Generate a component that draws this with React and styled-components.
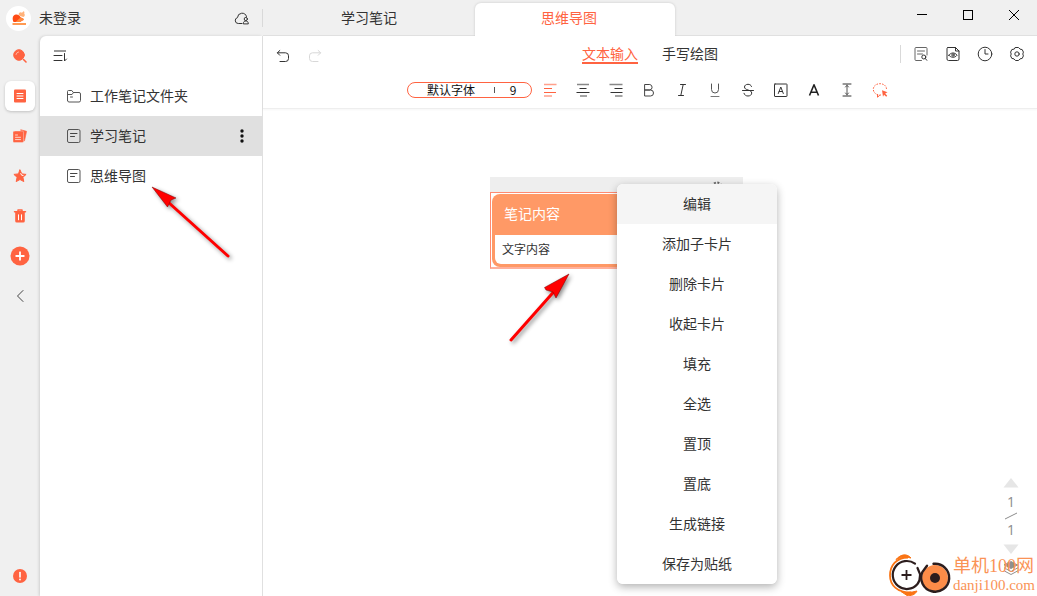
import React from "react";
import styled, { createGlobalStyle, ThemeProvider, css } from "styled-components";

const theme = {
  accent: "#ff6341",
  card: "#ff9966",
  chrome: "#f0f0f0",
  line: "#e0e0e0",
  text: "#333333",
};

const Global = createGlobalStyle`
  *, *::before, *::after { box-sizing: border-box; }
  body { margin: 0; background: #fff; }
  body, button, select {
    font-family: "Noto Sans CJK SC", "Noto Sans", sans-serif;
    font-size: 14px;
    line-height: 20px;
    color: #333;
  }
  button { border: 0; padding: 0; background: none; cursor: pointer; }
  svg { display: block; flex: none; }
`;

const Shell = styled.div`
  position: relative;
  display: flex;
  flex-direction: column;
  min-height: 100vh;
  overflow: hidden;
  background: ${(p) => p.theme.chrome};
`;

/* ---------- title bar ---------- */

const TitleBar = styled.header`
  display: flex;
  height: 36px;
  background: ${(p) => p.theme.chrome};
`;

const Account = styled.div`
  display: flex;
  align-items: center;
  width: 263px;
  padding-left: 6px;
`;

const Avatar = styled.span`
  display: grid;
  place-items: center;
  width: 25px;
  height: 25px;
  margin-right: 8px;
  border-radius: 50%;
  background: #fff;
`;

const AccountName = styled.button`
  flex: 1;
  padding-bottom: 2px;
  text-align: left;
`;

const Divider = styled.span`
  width: 1px;
  height: 18px;
  margin-left: 12px;
  background: #d9d9d9;
`;

const TabBar = styled.nav`
  display: flex;
  flex: 1;
  align-items: flex-end;
  box-shadow: inset 0 -1px 0 ${(p) => p.theme.line};
`;

const Tab = styled.button`
  width: 212px;
  height: 36px;
  padding-bottom: 2px;
  ${(p) =>
    p.$active &&
    css`
      width: 200px;
      height: 33px;
      padding: 0 12px 5px 0;
      border-radius: 6px 6px 0 0;
      background: #fff;
      color: ${p.theme.accent};
      box-shadow: 0 0 3px rgba(0, 0, 0, 0.16);
      clip-path: inset(-4px -4px 0 -4px);
    `}
`;

const WindowControls = styled.div`
  display: flex;
  margin-left: auto;
  align-self: flex-start;
`;

const WindowButton = styled.button`
  display: grid;
  place-items: center;
  width: 46px;
  height: 30px;
`;

/* ---------- body ---------- */

const Body = styled.div`
  display: grid;
  grid-template-columns: 40px 222px minmax(0, 1fr);
  flex: 1;
`;

const Rail = styled.nav`
  display: flex;
  flex-direction: column;
`;

const RailButton = styled.button`
  display: grid;
  place-items: center;
  width: 40px;
  height: 40px;
  color: ${(p) => p.theme.accent};
  ${(p) => p.$last && "margin-top: auto;"}
`;

const RailTile = styled.span`
  display: grid;
  place-items: center;
  width: 30px;
  height: 30px;
  border-radius: 6px;
  ${(p) =>
    p.$active && "background: #fff; box-shadow: 0 1px 3px rgba(0, 0, 0, 0.2);"}
`;

const Notebook = styled.aside`
  border-radius: 6px 0 0 0;
  background: #fff;
  box-shadow: -1px 0 3px rgba(0, 0, 0, 0.14);
`;

const SortButton = styled.button`
  display: flex;
  align-items: center;
  width: 40px;
  height: 40px;
  padding-left: 13px;
`;

const NoteList = styled.ul`
  margin: 0;
  padding: 0;
  list-style: none;
`;

const NoteRow = styled.li`
  display: flex;
  align-items: center;
  height: 40px;
  padding-right: 12px;
  background: ${(p) => (p.$active ? p.theme.line : "transparent")};
`;

const NoteName = styled.button`
  display: flex;
  flex: 1;
  align-items: center;
  gap: 8px;
  height: 40px;
  padding-left: 26px;
`;

const NoteLabel = styled.span`
  padding-bottom: 2px;
`;

const Editor = styled.main`
  display: flex;
  flex-direction: column;
  min-width: 0;
  background: #fff;
  border-left: 1px solid ${(p) => p.theme.line};
`;

const Toolbars = styled.div`
  border-bottom: 1px solid #eeeeee;
  box-shadow: 0 1px 2px rgba(0, 0, 0, 0.04);
`;

const TopTools = styled.div`
  display: grid;
  grid-template-columns: 1fr auto 1fr;
  align-items: center;
  height: 36px;
  padding: 0 12px;
`;

const IconGroup = styled.div`
  display: flex;
  align-items: center;
  gap: 16px;
  justify-content: ${(p) => (p.$end ? "flex-end" : "flex-start")};
  ${(p) => !p.$end && "padding-top: 4px;"}
  ${Divider} { margin-right: -4px; }
`;

const ToolButton = styled.button`
  display: grid;
  place-items: center;
  width: 16px;
  height: 16px;
  color: ${(p) => (p.$accent ? p.theme.accent : "#333")};
  &:disabled { color: #d8d8d8; }
`;

const ModeTabs = styled.div`
  display: flex;
  gap: 24px;
`;

const ModeTab = styled.button`
  height: 20px;
  border-bottom: 2px solid ${(p) => (p.$active ? p.theme.accent : "transparent")};
  color: ${(p) => (p.$active ? p.theme.accent : p.theme.text)};
  line-height: 18px;
`;

const FormatTools = styled.div`
  display: flex;
  align-items: center;
  justify-content: center;
  gap: 17px;
  height: 36px;
  padding-right: 5px;
`;

const FontPill = styled.div`
  display: flex;
  align-items: center;
  flex: none;
  width: 125px;
  height: 16px;
  margin-right: -7px;
  border: 1px solid ${(p) => p.theme.accent};
  border-radius: 8px;
`;

const PillSelect = styled.select`
  appearance: none;
  width: ${(p) => p.$width};
  height: 14px;
  padding: 0;
  border: 0;
  background: none;
  color: #111;
  font-size: 12px;
  line-height: 14px;
  text-align: center;
`;

const PillDivider = styled.span`
  width: 1px;
  height: 6px;
  background: #555;
`;

/* ---------- mind-map canvas ---------- */

const Canvas = styled.section`
  position: relative;
  flex: 1;
  min-height: 484px;
`;

const CardNode = styled.article`
  position: absolute;
  left: 227px;
  top: 68px;
  width: 253px;
`;

const CardHandle = styled.div`
  display: flex;
  justify-content: flex-end;
  height: 15px;
  padding: 4px 20px 0 0;
  background: #eeeeee;
  color: #666;
  overflow: hidden;
`;

const CardFrame = styled.div`
  border: 1px solid #ff8a70;
  border-bottom: 2px solid #ffb09c;
  padding: 1px 1px 0;
`;

const Card = styled.div`
  padding-bottom: 3px;
  border-radius: 8px;
  background: ${(p) => p.theme.card};
`;

const CardTitle = styled.h2`
  margin: 0;
  padding: 9px 12px 12px;
  color: #fff;
  font-size: 14px;
  font-weight: 400;
  line-height: 20px;
`;

const CardText = styled.p`
  margin: 0 3px;
  padding: 4px 7px 5px;
  border-radius: 0 0 6px 6px;
  background: #fff;
  font-size: 12px;
  line-height: 20px;
`;

const ContextMenu = styled.div`
  position: absolute;
  left: 354px;
  top: 75px;
  display: flex;
  flex-direction: column;
  width: 160px;
  border-radius: 6px;
  background: #fff;
  overflow: hidden;
  box-shadow: 0 3px 8px rgba(0, 0, 0, 0.3);
`;

const MenuItem = styled.button`
  height: 40px;
  padding-bottom: 2px;
  background: ${(p) => (p.$hover ? "#f5f5f5" : "#fff")};
`;

const Pager = styled.div`
  position: absolute;
  right: 18px;
  bottom: 20px;
  display: flex;
  flex-direction: column;
  align-items: center;
  width: 16px;
  color: #8c8c8c;
`;

const PagerButton = styled.button`
  height: 10px;
  color: #e6e6e6;
`;

const PageNumber = styled.span`
  height: 20px;
  font-family: "Open Sans", sans-serif;
  margin: ${(p) => (p.$first ? "4px 0 0" : "0 0 4px")};
`;

const LayersButton = styled.button`
  margin-top: 6px;
  color: #8f8f8f;
`;

const Watermark = styled.a`
  position: absolute;
  right: 2px;
  bottom: 0;
  display: flex;
  align-items: center;
  gap: 1px;
  color: #fa9356;
  text-decoration: none;
`;

const WatermarkText = styled.span`
  display: flex;
  flex-direction: column;
  font-family: "Liberation Serif", "Noto Sans CJK SC", serif;
`;

const WatermarkName = styled.span`
  font-size: 18px;
  line-height: 20px;
`;

const WatermarkSite = styled.span`
  font-size: 15px;
  line-height: 18px;
`;

const Pointer = styled.svg`
  position: absolute;
  left: ${(p) => p.$left};
  top: ${(p) => p.$top};
  pointer-events: none;
  filter: drop-shadow(2px 2px 2px rgba(0, 0, 0, 0.45));
`;

/* ---------- icons ---------- */

const Line = ({ size = 16, children, ...rest }) => (
  <svg
    width={size}
    height={size}
    viewBox="0 0 16 16"
    fill="none"
    stroke="currentColor"
    strokeWidth="1"
    strokeLinecap="round"
    strokeLinejoin="round"
    aria-hidden="true"
    {...rest}
  >
    {children}
  </svg>
);

const icons = {
  search: (
    <Line>
      <circle cx="7" cy="7" r="5.3" fill="currentColor" />
      <path d="M4 6.5a3.2 3.2 0 0 1 2.6-2.6" stroke="#ffb3a0" />
      <path d="M11.5 11.5l2.5 2.5" strokeWidth="1.6" />
    </Line>
  ),
  notes: (
    <Line>
      <rect x="2" y="1.5" width="12" height="13" rx="1" fill="currentColor" stroke="none" />
      <path d="M5 5.5h6M5 8h6M5 10.5h6" stroke="#fff" />
    </Line>
  ),
  stickers: (
    <Line>
      <path d="M9 1.800l5.600 1.500-2.100 9.500-2.500.8z" fill="currentColor" strokeWidth=".6" />
      <rect x="1" y="3" width="10.500" height="11.500" rx="1.2" fill="currentColor" stroke="#f0f0f0" strokeWidth=".4" />
      <path d="M3.500 7h2M3.500 9.300h5M3.500 11.600h5" stroke="#ffd6cb" />
    </Line>
  ),
  star: (
    <Line>
      <path d="M8 2l1.800 3.900 4.300.5-3.200 2.900.9 4.300L8 11.500l-3.800 2.100.9-4.300-3.200-2.900 4.300-.5z" fill="currentColor" />
      <path d="M8.800 5.600l.8 1.600 1.500.3" stroke="#fff" />
    </Line>
  ),
  trash: (
    <Line>
      <path d="M2.500 3.800h11M6 3.200V2h4v1.200" strokeWidth="1.500" />
      <path d="M3.200 4h9.600v9a1.500 1.500 0 0 1-1.500 1.500H4.700a1.500 1.500 0 0 1-1.500-1.500z" fill="currentColor" stroke="none" />
      <path d="M6.500 6.800v5M9.500 6.800v5" stroke="#fff" />
    </Line>
  ),
  add: (
    <Line size={20} viewBox="0 0 20 20">
      <circle cx="10" cy="10" r="9.500" fill="currentColor" stroke="none" />
      <path d="M10 6.200v7.600M6.200 10h7.600" stroke="#fff" strokeWidth="1.800" />
    </Line>
  ),
  back: (
    <Line>
      <path d="M11 2.500L5.500 8l5.500 5.500" stroke="#444" />
    </Line>
  ),
  alert: (
    <Line>
      <circle cx="8" cy="8" r="7" fill="currentColor" stroke="none" />
      <path d="M8 4.500v4.500" stroke="#fff" strokeWidth="1.600" />
      <circle cx="8" cy="11.500" r=".9" fill="#fff" stroke="none" />
    </Line>
  ),
  sort: (
    <Line>
      <path d="M1 3h12" stroke="#999" strokeWidth="2" strokeLinecap="butt" />
      <path d="M1 7.500h8M1 12.500h8M11.500 5.500v7.500l2-2" />
    </Line>
  ),
  folder: (
    <Line>
      <path d="M1.500 12.500v-9a1 1 0 0 1 1-1h3.300l1.500 2h5.700a1.500 1.500 0 0 1 1.500 1.500v6.500a1.500 1.500 0 0 1-1.500 1.500H3a1.500 1.500 0 0 1-1.500-1.500zM7.500 4.500L6 6.500H2M4.500 9h2" stroke="#555" />
    </Line>
  ),
  note: (
    <Line>
      <rect x="1.500" y="1.500" width="12.500" height="13" rx="1.500" stroke="#555" />
      <path d="M4.500 5.500h6.500M4.500 8.500h4" stroke="#444" />
    </Line>
  ),
  more: (
    <Line stroke="none">
      <circle cx="8" cy="3" r="1.700" fill="#111" />
      <circle cx="8" cy="8" r="1.700" fill="#111" />
      <circle cx="8" cy="13" r="1.700" fill="#111" />
    </Line>
  ),
  cloud: (
    <Line>
      <path d="M8 13.500H4.300a3 3 0 0 1-.8-5.900 4.600 4.600 0 0 1 9-1.100" />
      <circle cx="11.800" cy="9" r="1.600" />
      <path d="M9.300 13.500c0-1.700 1-2.500 2.500-2.500s2.500.8 2.500 2.500z" />
    </Line>
  ),
  undo: (
    <Line>
      <path d="M4.800 2.500L2.300 4.800l2.500 2.500M2.500 4.800h8a3 3 0 0 1 3 3v2.700a3 3 0 0 1-3 3H5" />
    </Line>
  ),
  redo: (
    <Line>
      <path d="M11.200 2.500l2.500 2.300-2.500 2.500M13.500 4.800h-8a3 3 0 0 0-3 3v2.700a3 3 0 0 0 3 3H11" />
    </Line>
  ),
  find: (
    <Line>
      <path d="M8.500 14.500H3a1 1 0 0 1-1-1V2.500a1 1 0 0 1 1-1h10a1 1 0 0 1 1 1V9M4.500 5h7M4.500 8h5" stroke="#666" />
      <circle cx="10.800" cy="11" r="2" />
      <path d="M12.300 12.500l1.500 1.800" />
    </Line>
  ),
  preview: (
    <Line>
      <path d="M3 1.500h7.500l3.500 3.500v8a1.500 1.500 0 0 1-1.500 1.500H3.500A1.500 1.500 0 0 1 2 13V2.500a1 1 0 0 1 1-1zM10.500 1.500V5H14" />
      <path d="M3.800 9.200c2.300-3 6-3 8.300 0-2.300 2.800-6 2.800-8.300 0z" />
      <circle cx="8" cy="9" r="1.200" />
    </Line>
  ),
  clock: (
    <Line>
      <circle cx="8" cy="8" r="6.800" />
      <path d="M8 3.500V8h3" />
    </Line>
  ),
  settings: (
    <Line>
      <path d="M6.500 1.500h3l1.500 1.600 2.200.5 1.200 2.500-.6 1.900.6 1.900-1.200 2.500-2.200.5-1.500 1.600h-3L5 12.900l-2.200-.5-1.200-2.500.6-1.900-.6-1.900 1.200-2.500L5 3.100z" />
      <circle cx="8" cy="8" r="2.200" />
    </Line>
  ),
  left: (
    <Line strokeLinecap="butt">
      <path d="M2 2.500h12.500M2 14h8" opacity=".6" strokeWidth="1.500" />
      <path d="M2 6.500h8M2 10.500h12" />
    </Line>
  ),
  center: (
    <Line strokeLinecap="butt">
      <path d="M2 2.500h12M5 14h7" stroke="#888" strokeWidth="1.500" />
      <path d="M4.500 6.500h7M1.500 10.500h13" />
    </Line>
  ),
  right: (
    <Line strokeLinecap="butt">
      <path d="M1.500 2.500h13M7 14h7.500" stroke="#888" strokeWidth="1.500" />
      <path d="M6.500 6.500h8M2.500 10.500h12" />
    </Line>
  ),
  bold: (
    <Line>
      <path d="M4 2.500h4.800a2.800 2.800 0 0 1 0 5.500H4zM4 8h5.500a3 3 0 0 1 0 6H4z" stroke="#444" />
    </Line>
  ),
  italic: (
    <Line>
      <path d="M6.500 2.500h5M4.500 13.500h5M9.200 2.500l-2.400 11" />
    </Line>
  ),
  underline: (
    <Line>
      <path d="M4.500 2v5.500a3.500 3.500 0 0 0 7 0V2" stroke="#555" />
      <path d="M4 14.500h8" stroke="#777" />
    </Line>
  ),
  strike: (
    <Line>
      <path d="M11.500 4.500C11 3 9.700 2.300 8 2.300c-2 0-3.500 1.100-3.500 2.700C4.500 6.700 6 7.300 8 8c2.200.6 3.700 1.300 3.700 3.100S10 14 8 14s-3.500-.9-4-2.700M2.500 8.500h11" />
    </Line>
  ),
  boxed: (
    <Line>
      <rect x="1.500" y="2" width="12.500" height="12.500" rx=".5" />
      <path d="M5.300 11.500L7.800 5l2.500 6.500M6.200 9.500h3.200" />
    </Line>
  ),
  letter: (
    <Line>
      <path d="M3.500 13.500L8 2.800l4.500 10.700M5 10.200h6" stroke="#222" strokeWidth="1.600" strokeLinecap="butt" />
    </Line>
  ),
  height: (
    <Line>
      <path d="M4 2h8M4 14h8" />
      <path d="M8 3v10M6.500 5L8 3.300 9.500 5M6.500 11L8 12.700 9.500 11" stroke="#555" />
    </Line>
  ),
  lasso: (
    <Line>
      <path d="M9 13c-1 .2-2 .1-3-.2C3.200 12 1.300 10 1.300 7.300 1.300 4 4.200 1.700 8 1.700s6.500 2.300 6.500 5.300" strokeDasharray="1.600 1.200" strokeLinecap="butt" />
      <path d="M5.500 13v2.200l2-1.700" />
      <path d="M10 8.300l5.500 2-2.300 1.200 2 2.200-1 1-2.100-2-1.100 2.100z" fill="currentColor" stroke="none" />
    </Line>
  ),
};

const Squirrel = () => (
  <svg width="16" height="16" viewBox="0 0 16 16" aria-hidden="true">
    <path d="M2.500 12C.8 8 2 4.800 5 4.500c2-.2 3.500.8 4.500 2.800l2.500 1.200c1 .5.500 1.800-.5 1.900L9 12z" fill="#ff4b14" />
    <path d="M4.500 12l5-4.500 3 1.200c.8.600.2 1.600-.8 1.600L9 12z" fill="#ff8a3d" />
    <path d="M7.500 4.300c.5-2 2.200-2.500 3.500-1.500l1.500-1.500c1 .3 1.200 1.300.7 2.200 1.100 1.500.6 3-.9 3.400L10 6.300c-1.200-.2-2.200-.9-2.500-2z" fill="#ffb27a" />
    <rect x="1.500" y="13" width="13.500" height="2" fill="#ff9a52" />
  </svg>
);

const WatermarkLogo = () => (
  <svg width="64" height="42" viewBox="0 0 64 42" fill="none" aria-hidden="true">
    <path d="M20 3.500C8 3.500 2 12 2 21.500S9 38.500 23 38.500" stroke="#fa7414" strokeWidth="1.800" />
    <path d="M8 5.500C12 1 18-1.500 23 4 17 2.500 13 3.500 8 5.500zM13 37.500c5 1.500 10 1 16-.5-2 4-6 5-10 4.500z" fill="#fa7414" stroke="#fa7414" />
    <path d="M27 9.700A14 14 0 1 0 29.500 30C32 27 32 24 32 21.500V20l-2.500-6" stroke="#2c1d1d" strokeWidth="2.200" strokeLinecap="round" />
    <path d="M18.500 16v10M13.500 21h10" stroke="#2c1d1d" strokeWidth="1.800" />
    <circle cx="47" cy="24" r="13" fill="#fc8c48" />
    <path d="M45.500 9.800a14 14 0 1 1-11 8l4.500-6" stroke="#2c1d1d" strokeWidth="2.400" strokeLinecap="round" />
    <circle cx="47" cy="24" r="5" fill="#2c1d1d" />
  </svg>
);

const Layers = () => (
  <Line>
    <path d="M8 1.500l6.500 3.500L8 8.500 1.500 5z" fill="currentColor" />
    <path d="M1.500 8L8 11.500 14.500 8M1.500 11L8 14.500l6.500-3.500" />
  </Line>
);

/* ---------- data ---------- */

const railItems = [
  { id: "search", label: "搜索" },
  { id: "notes", label: "笔记", active: true },
  { id: "stickers", label: "贴纸" },
  { id: "star", label: "收藏" },
  { id: "trash", label: "回收站" },
  { id: "add", label: "新建" },
  { id: "back", label: "收起" },
  { id: "alert", label: "提示", last: true },
];

const notes = [
  { name: "工作笔记文件夹", icon: "folder" },
  { name: "学习笔记", icon: "note", active: true },
  { name: "思维导图", icon: "note" },
];

const viewTools = [
  ["find", "查找"],
  ["preview", "预览"],
  ["clock", "历史"],
  ["settings", "设置"],
];

const formatTools = [
  ["left", "左对齐", true],
  ["center", "居中"],
  ["right", "右对齐"],
  ["bold", "加粗"],
  ["italic", "斜体"],
  ["underline", "下划线"],
  ["strike", "删除线"],
  ["boxed", "文字背景"],
  ["letter", "文字颜色"],
  ["height", "行高"],
  ["lasso", "套索", true],
];

const menuItems = [
  "编辑",
  "添加子卡片",
  "删除卡片",
  "收起卡片",
  "填充",
  "全选",
  "置顶",
  "置底",
  "生成链接",
  "保存为贴纸",
];

export default function App() {
  return (
    <ThemeProvider theme={theme}>
      <Global />
      <Shell>
        <TitleBar>
          <Account>
            <Avatar>
              <Squirrel />
            </Avatar>
            <AccountName>未登录</AccountName>
            <ToolButton aria-label="云同步">{icons.cloud}</ToolButton>
            <Divider />
          </Account>
          <TabBar>
            <Tab>学习笔记</Tab>
            <Tab $active aria-current="page">
              思维导图
            </Tab>
            <WindowControls>
              <WindowButton aria-label="最小化">
                <svg width="10" height="10" shapeRendering="crispEdges">
                  <path d="M0 4.500h10" stroke="#000" />
                </svg>
              </WindowButton>
              <WindowButton aria-label="最大化">
                <svg width="10" height="10" shapeRendering="crispEdges">
                  <rect x=".5" y=".5" width="9" height="9" fill="none" stroke="#000" />
                </svg>
              </WindowButton>
              <WindowButton aria-label="关闭">
                <svg width="10" height="10">
                  <path d="M0 0l10 10M10 0L0 10" stroke="#000" />
                </svg>
              </WindowButton>
            </WindowControls>
          </TabBar>
        </TitleBar>

        <Body>
          <Rail>
            {railItems.map((item) => (
              <RailButton key={item.id} $last={item.last} aria-label={item.label}>
                <RailTile $active={item.active}>{icons[item.id]}</RailTile>
              </RailButton>
            ))}
          </Rail>

          <Notebook>
            <SortButton aria-label="排序">{icons.sort}</SortButton>
            <NoteList>
              {notes.map((note) => (
                <NoteRow key={note.name} $active={note.active}>
                  <NoteName>
                    {icons[note.icon]}
                    <NoteLabel>{note.name}</NoteLabel>
                  </NoteName>
                  {note.active && (
                    <ToolButton aria-label="更多">{icons.more}</ToolButton>
                  )}
                </NoteRow>
              ))}
            </NoteList>
          </Notebook>

          <Editor>
            <Toolbars>
              <TopTools>
                <IconGroup>
                  <ToolButton aria-label="撤销">{icons.undo}</ToolButton>
                  <ToolButton aria-label="重做" disabled>
                    {icons.redo}
                  </ToolButton>
                </IconGroup>
                <ModeTabs>
                  <ModeTab $active>文本输入</ModeTab>
                  <ModeTab>手写绘图</ModeTab>
                </ModeTabs>
                <IconGroup $end>
                  <Divider />
                  {viewTools.map(([id, label]) => (
                    <ToolButton key={id} aria-label={label}>
                      {icons[id]}
                    </ToolButton>
                  ))}
                </IconGroup>
              </TopTools>
              <FormatTools>
                <FontPill>
                  <PillSelect $width="86px" aria-label="字体" defaultValue="默认字体">
                    <option>默认字体</option>
                  </PillSelect>
                  <PillDivider />
                  <PillSelect $width="36px" aria-label="字号" defaultValue="9">
                    <option>9</option>
                  </PillSelect>
                </FontPill>
                {formatTools.map(([id, label, accent]) => (
                  <ToolButton key={id} aria-label={label} $accent={accent}>
                    {icons[id]}
                  </ToolButton>
                ))}
              </FormatTools>
            </Toolbars>

            <Canvas>
              <CardNode>
                <CardHandle>
                  <svg width="12" height="12" viewBox="0 0 12 12" fill="none" stroke="currentColor">
                    <circle cx="6" cy="6" r="4.500" strokeWidth="2" strokeDasharray="2 1.500" />
                    <circle cx="6" cy="6" r="2" />
                  </svg>
                </CardHandle>
                <CardFrame>
                  <Card>
                    <CardTitle>笔记内容</CardTitle>
                    <CardText>文字内容</CardText>
                  </Card>
                </CardFrame>
              </CardNode>

              <Pointer $left="244px" $top="163px" width="66" height="72" viewBox="0 0 66 72">
                <path d="M4 68L51 15" stroke="#f00" strokeWidth="3" strokeLinecap="round" />
                <path d="M62 2L49 26l-3-6-7-2-1.500-2.500z" fill="#f00" stroke="#700" strokeWidth=".5" />
              </Pointer>

              <ContextMenu role="menu">
                {menuItems.map((label, i) => (
                  <MenuItem key={label} role="menuitem" $hover={i === 0}>
                    {label}
                  </MenuItem>
                ))}
              </ContextMenu>

              <Pager>
                <PagerButton aria-label="上一页">
                  <svg width="16" height="10" viewBox="0 0 16 10">
                    <path d="M8 0l7.500 9.500H.5z" fill="currentColor" />
                  </svg>
                </PagerButton>
                <PageNumber $first>1</PageNumber>
                <svg width="14" height="8" viewBox="0 0 14 8">
                  <path d="M1 7L13 1" stroke="currentColor" />
                </svg>
                <PageNumber>1</PageNumber>
                <PagerButton aria-label="下一页">
                  <svg width="16" height="10" viewBox="0 0 16 10">
                    <path d="M.5 .5h15L8 10z" fill="currentColor" />
                  </svg>
                </PagerButton>
                <LayersButton aria-label="图层">
                  <Layers />
                </LayersButton>
              </Pager>
            </Canvas>
          </Editor>
        </Body>

        <Pointer $left="150px" $top="184px" width="82" height="76" viewBox="0 0 82 76">
          <path d="M78 72L18 18" stroke="#f00" strokeWidth="3" strokeLinecap="round" />
          <path d="M2 3l24 11-5 2-3.500 7z" fill="#f00" stroke="#700" strokeWidth=".5" />
        </Pointer>

        <Watermark href="#danji100">
          <WatermarkLogo />
          <WatermarkText>
            <WatermarkName>单机100网</WatermarkName>
            <WatermarkSite>danji100.com</WatermarkSite>
          </WatermarkText>
        </Watermark>
      </Shell>
    </ThemeProvider>
  );
}
